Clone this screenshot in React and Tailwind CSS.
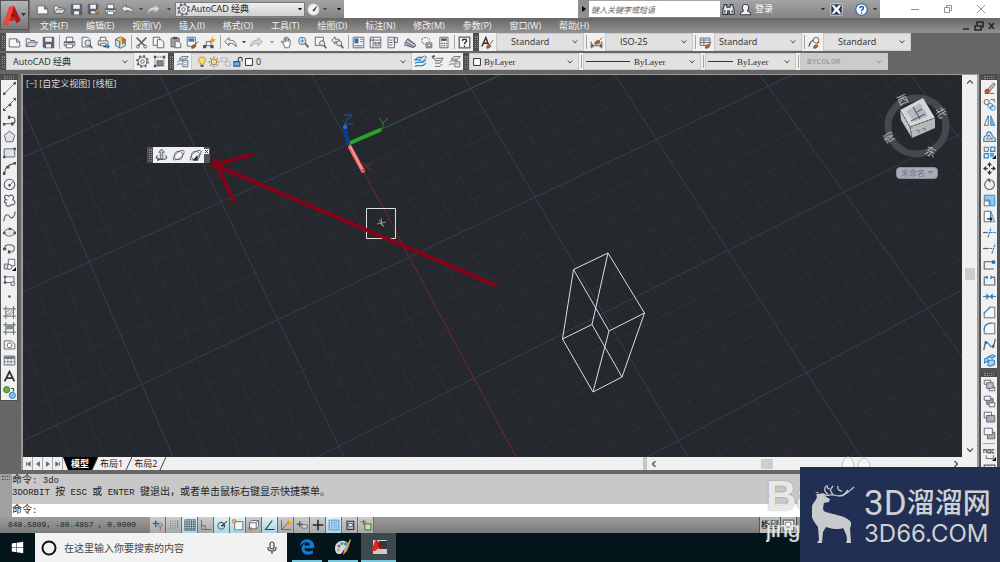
import { useState } from 'react';
import { FaEdgeLegacy, FaWindows } from 'react-icons/fa';

const UI = "font-['Open_Sans','Noto_Sans_CJK_SC',sans-serif]";
const MONO = "font-['Liberation_Mono','Noto_Sans_CJK_SC',monospace]";

const paper = { fill: '#f4f5f7', stroke: '#59606a' };
const blue = { stroke: '#2f86c8' };
const dark = { fill: '#4b525c', stroke: 'none' };

// All toolbar drawings live on a 16x16 grid
const icons = {
  nuevo: <path d="M1.500 3.500h9l4 4v6h-13zM10.500 3.500v4h4" {...paper} />,
  open: <><path d="M1.500 13V3.500h4l1 2h5v2" {...paper} /><path d="M1.500 13l3-5.500h11L12 13z" fill="#cfd5dc" /></>,
  save: <><path d="M1.500 1.500h13v13h-12l-1-1z" fill="#59616d" /><path d="M4 2h8v5H4zM5 10h6v4H5z" fill="#eef0f3" stroke="none" /></>,
  saveAs: <><path d="M1.500 1.500h12v12h-12z" fill="#59616d" /><path d="M4 2h7v5H4zM5 10h5v3H5z" fill="#eef0f3" stroke="none" /><path d="M8 14l6-7 1.500 1.500-6 6z" fill="#f0a040" stroke="#a85f18" strokeWidth=".6" /></>,
  print: <><path d="M4 7V1.500h8V7M1.500 7h13v5h-13z" {...paper} /><path d="M4 10h8v4.500H4z" fill="#fff" /><path d="M2 8h12" strokeWidth="1.600" /></>,
  preview: <><path d="M2.500 1.500h7l3 3v9h-10z" {...paper} /><circle cx="9.500" cy="8.500" r="3.500" fill="#dbe7f0" /><path d="M12 11l3 4" strokeWidth="2" /></>,
  publish: <><path d="M4 6V1.500h7V6M1.500 6h12v5h-12z" {...paper} /><path d="M4 9h7v3H4z" fill="#fff" /><path d="M8 12h5v-2l3 3-3 3v-2H8z" fill="#2469b8" stroke="none" /></>,
  cube3d: <><path d="M8 1l6 3v8l-6 3-6-3V4z" fill="#cfe2ee" /><circle cx="10" cy="6" r="4" fill="#e8c840" stroke="none" /><path d="M10 2a4 4 0 0 1 4 4h-4z" fill="#d8543a" stroke="none" /><path d="M10 10a4 4 0 0 0 4-4h-4z" fill="#4fa85a" stroke="none" /><path d="M2 4l5 3v8" /></>,
  cut: <><path d="M2 2l10 10M14 2L4 12" strokeWidth="1.800" /><circle cx="3.500" cy="13" r="1.800" /><circle cx="12.500" cy="13" r="1.800" /></>,
  copy: <><path d="M1.500 1.500h8v10h-8z" {...paper} /><path d="M6.500 4.500h5l3 3v7h-8z" {...paper} /></>,
  paste: <><path d="M2.500 2.500h10v11h-10z" fill="#a6a396" /><path d="M5 1h5v3H5z" {...dark} /><path d="M7.500 6.500h4l3 3v5h-7z" {...paper} /></>,
  match: <><path d="M1.500 1.500h10v11h-10z" {...paper} /><path d="M3 3h7v4H3z" fill="#3b78b8" stroke="none" /><path d="M15 7l-4 4M7 15c0-3 2-5 4-4s1 4-4 4z" fill="#b96a2c" stroke="#84471a" /></>,
  blockEdit: <><path d="M4 12V7h6v5z" {...paper} /><path d="M0 11h4v4H0zM9 11h4v4H9z" {...dark} /><path d="M13 0l-5 6h3l-1 4 6-6h-4z" fill="#f39a1f" stroke="none" /></>,
  undo: <path d="M1 7l5-5v3c5 0 9 2 9 8-2-3-4-4-9-4v3z" fill="#f1f2f4" />,
  redo: <path d="M15 7l-5-5v3C5 5 1 7 1 13c2-3 4-4 9-4v3z" fill="#d8dadd" stroke="#a2a6ac" />,
  pan: <path d="M4 9L1.500 7.500C1 6 3 6 5 8V3.500c0-1.500 1.500-1.500 1.700 0V2c.2-1.500 1.800-1.500 2 0v1c.3-1.300 1.800-1.300 2 0v2c.3-1 1.800-1 1.800.5V10l-1.500 4.500h-5zM6.700 3v4M8.700 3v4M10.700 4v3" fill="#fff" />,
  zoom: <><circle cx="6.500" cy="6" r="4.500" fill="#e6edf3" /><path d="M10 9l4 5" strokeWidth="2.200" /><path d="M6.500 3v6M4 6h5" {...blue} /></>,
  zoomWin: <><path d="M1.500 1.500h10v10h-10z" {...paper} /><circle cx="10" cy="9" r="3.200" fill="#dbe7f0" /><path d="M12 11l3 4" strokeWidth="2.200" /></>,
  zoomPrev: <><path d="M1 5l4-4v3h5v3H5v3z" {...paper} /><circle cx="10" cy="9" r="3.200" fill="#dbe7f0" /><path d="M12 11l3 4" strokeWidth="2.200" /></>,
  props: <><path d="M1.500 1.500h13v13h-13z" {...paper} /><path d="M3 3h5v6H3z" fill="#2f6db0" stroke="none" /><path d="M10 4h3M10 7h3M3 12h10" /></>,
  dc: <><path d="M1.500 1.500h13v13h-13z" {...paper} /><path d="M5 2v12M1 5h14M7 8h2v2H7zM11 8h2v2h-2zM7 12h6" /></>,
  palette: <><path d="M2.500 1.500h8v13h-8z" {...paper} /><path d="M10 2h4v6h-4zM4 5h4M4 8h4M4 11h4" /></>,
  sheet: <><path d="M2 9l4-6 9 7v3l-3 1z" fill="#c9cfd6" /><path d="M1 11l11 3 3-2M3 7l9 5M5 4l9 6" /></>,
  markup: <><path d="M2.500 3.500c2-3 5-1 6-1s4 0 3 3 1 3-2 4-7 0-7-2z" {...paper} strokeDasharray="2 1" /><path d="M7.500 8.500h7v6h-7z" fill="#fff" /><path d="M9 10h4v3H9z" /></>,
  calc: <><path d="M3.500 1.500h10v13h-10z" {...paper} /><path d="M5 3h7v3H5z" {...dark} /><path d="M5 9h7M5 12h7" strokeDasharray="2 1" strokeWidth="1.500" /></>,
  help: <><path d="M1.500 1.500h13v13h-13z" {...paper} strokeWidth="1.600" /><path d="M5.500 6c0-3 5-3 5 0 0 2-2.500 1.500-2.500 4M8 12v1.500" stroke="#222" strokeWidth="1.600" /></>,
  table: <><path d="M1.500 2.500h13v11h-13z" {...paper} /><path d="M2 3h12v3H2z" fill="#6b7684" stroke="none" /><path d="M2 9.500h12M6 5v8M10 5v8" strokeWidth=".8" /></>,
  textStyle: <><path d="M1 13L6 2l4 11M3 9h5" stroke="#333" strokeWidth="1.800" /><path d="M15 5l-4 5M7 15c0-3 2-5 4-4s1 4-4 4z" fill="#b96a2c" stroke="#84471a" /></>,
  dimStyle: <><path d="M1.500 7v8M14.500 7v8M2 12h12M4 10l-2 2 2 2M12 10l2 2-2 2" strokeWidth="1.300" /><path d="M15 2l-4 4M6 10c0-3 2-5 5-4s1 4-5 4z" fill="#b96a2c" stroke="#84471a" /></>,
  tableStyle: <><path d="M1.500 2.500h12v9h-12zM2 5h11M2 8h11M6 3v8" {...paper} /><path d="M15 7l-3 3M8 15c0-3 2-5 4-4s1 4-4 4z" fill="#b96a2c" stroke="#84471a" /></>,
  leaderStyle: <><path d="M1 13c2-8 4-6 6-9" strokeWidth="1.500" /><circle cx="10" cy="5" r="3.500" fill="#f5f5f5" /><path d="M14 7l-3 3M7 15c0-3 2-5 4-4s1 4-4 4z" fill="#b96a2c" stroke="#84471a" /></>,
  gear: <><circle cx="8" cy="8" r="5.500" fill="#f3f3f3" strokeWidth="1.400" /><circle cx="8" cy="8" r="7" strokeDasharray="2.500 3" strokeWidth="1.800" /><circle cx="8" cy="8" r="2.200" /></>,
  myWork: <><path d="M2.500 2.500h11v11h-11z" strokeDasharray="2 1" /><path d="M5 7h7v6H5z" fill="#7d8794" /><path d="M1 1h3v3H1zM12 1h3v3h-3zM1 12h3v3H1z" {...dark} /></>,
  layers: <><path d="M4 5l3-3h8l-3 3zM2 9l2-2h5M1 13l2-2h4" {...paper} /><path d="M8.500 6.500h6v8h-6z" fill="#fff" /><path d="M10 9h3M10 12h3" {...blue} /></>,
  layersBlue: <><path d="M1 6l4-3h9l-4 3zM1 10l3-1h7l4-3M1 14l3-1h7l4-3" {...blue} strokeWidth="1.500" /><path d="M6 6l7-5 2 2-5 5z" fill="#eef2f5" /></>,
  layersPrev: <><path d="M5 6l2-2h8l-3 3H5zM5 10h6l3-3M5 14h6l3-3" {...paper} /><path d="M5 2H2l2-2M1 2l3 3" strokeWidth="1.500" /></>,
  layersState: <><path d="M4 5l3-3h8l-3 3zM2 9l2-2h8M1 13l2-2h4" {...paper} /><path d="M8.500 8.500h6v6h-6z" fill="#fff" /><path d="M10 11h3" /></>,
  bulb: <><path d="M8 1.500c6 0 5 5.500 2.500 7.500v2h-5V9C3 7 2 1.500 8 1.500z" fill="#fbdc6a" stroke="#b08a2a" /><path d="M6 12h4v2.500H6z" {...dark} /></>,
  sun: <><circle cx="8" cy="8" r="3.700" fill="#fbe27a" stroke="#8b7433" /><path d="M8 1v2M8 13v2M1 8h2M13 8h2M3 3l1.500 1.500M11.500 11.500L13 13M13 3l-1.500 1.500M4.500 11.500L3 13" stroke="#6d6140" strokeWidth="1.400" /></>,
  freeze: <><path d="M1.500 2.500h8v5h-8z" stroke="#a9adb2" /><circle cx="10.500" cy="10.500" r="3.500" stroke="#b3b6ba" strokeWidth="2" strokeDasharray="2 1" /></>,
  lock: <><path d="M2.500 7.500h8v6h-8z" fill="#6ab0e4" stroke="#225c92" strokeWidth="1.400" /><path d="M8.500 7V4c0-3 5-3 5 0v3" stroke="#33475c" strokeWidth="1.500" /></>,
  swatch: <path d="M2.500 2.500h11v11h-11z" fill="#fff" stroke="#333" strokeWidth="1.600" />,
  binoc: <path d="M3 2h3v3h4V2h3l2 7v5H9v-4H7v4H1V9zM3.500 9v3M12.500 9v3" fill="#dfe3e8" stroke="#343a43" strokeWidth="1.400" />,
  user: <path d="M1.500 14.500c0-4 3-3 4-5C3 6 4 1.500 8 1.500S13 6 10.500 9.500c1 2 4 1 4 5z" fill="#f1f2f4" stroke="#3d434c" strokeWidth="1.300" />,
  exchange: <><path d="M1 1h14v14H1z" fill="#26344a" stroke="#dce1e8" /><path d="M3 3h2l3 3.500L11 3h2l-3 5 3 5h-2L8 9.500 5 13H3l3-5z" fill="#fff" stroke="#fff" /></>,
  helpRound: <><circle cx="8" cy="8" r="7" fill="#fff" stroke="#2d5fa4" strokeWidth="1.300" /><path d="M5.800 6.500c0-3 4.600-3 4.600 0C10.400 8 8 8 8 10M8 11.500V13" stroke="#1f4e9c" strokeWidth="1.700" /></>,
  compass: <><circle cx="8" cy="8" r="6.500" fill="#f3f4f5" stroke="#e3e3e3" strokeWidth="1.500" /><path d="M7 9l5-5-3 6z" fill="#444" /></>,

  // draw
  line: <><path d="M2 14L14 2" /><path d="M0 13h3v3H0zM13 0h3v3h-3z" {...dark} /></>,
  xline: <><path d="M1 15L15 1" /><path d="M0 12v4h4zM12 0h4v4zM7 7h3v3H7z" {...dark} /></>,
  pline: <><path d="M2 12h9c5 0 5-8 0-8H7" strokeWidth="1.500" /><path d="M0 11h3v3H0zM6 2h3v4H6zM10 10h3v4h-3z" {...dark} /></>,
  polygon: <path d="M8 1.500l6.500 5-2.500 8H4l-2.500-8z" {...paper} fill="#dfe3e8" />,
  rect: <><path d="M1.500 3.500h13v10h-13z" {...paper} fill="#dfe3e8" /><path d="M0 12h3v3H0zM13 2h3v3h-3z" {...dark} /></>,
  arc: <><path d="M2 14C2 8 6 3 14 2" strokeWidth="1.300" /><path d="M0 12h3v4H0zM4 5h4v3H4zM13 0h3v3h-3z" {...dark} /></>,
  circle: <><circle cx="8" cy="8" r="6.500" fill="#eef0f3" strokeWidth="1.300" /><path d="M8 9l4-4" /><circle cx="8" cy="9" r="1.500" {...dark} /></>,
  cloud: <path d="M4 7C-1 4 4-1 7 3c3-4 8 0 5 4 5 2 2 8-2 6-3 4-8 1-6-2-3 0-3-4 0-4z" {...paper} strokeWidth="1.400" />,
  spline: <path d="M1 14c1-10 5-9 7-6s6 2 7-6" strokeWidth="1.400" />,
  ellipse: <><ellipse cx="8" cy="8" rx="6.500" ry="4.500" fill="#e2e6ea" /><path d="M0 7h3v3H0zM13 7h3v3h-3zM7 2h3v3H7z" {...dark} /></>,
  earc: <><path d="M2 8c0-6 12-6 12 0 0 3-3 5-6 4" fill="#eceff2" strokeWidth="1.300" /><path d="M0 7h4v3H0zM6 10h3v4H6z" {...dark} /></>,
  insert: <><path d="M6.500 1.500h8v8h-8z" {...paper} /><path d="M1.500 7.500h6v6h-6z" fill="#dbe0e6" /><circle cx="8" cy="11" r="3" fill="#eee" /><path d="M11 16h5v-5z" fill="#111" stroke="none" /></>,
  block: <><path d="M2.500 3.500h11v7h-11z" {...paper} /><circle cx="12" cy="12" r="2.500" fill="#d5dae0" /><path d="M1 2h3v3H1zM1 9h3v3H1z" {...dark} /></>,
  point: <circle cx="8" cy="8" r="1.500" {...dark} />,
  hatch: <><path d="M3.500 0v16M13 0v16M0 3.500h16M0 12.500h16" /><path d="M4 8l5-4M4 12l9-8M7 12l6-5" strokeWidth=".8" /></>,
  gradient: <><path d="M3.500 0v16M13 0v16M0 3.500h16M0 12.500h16" /><path d="M4 4h9v5H4z" fill="#7e8f8a" stroke="none" /></>,
  region: <><path d="M1.500 3.500h9l4 4v6h-13z" {...paper} /><circle cx="8" cy="9" r="3" fill="#fff" /></>,
  mtext: <path d="M2 14L8 2l6 12M4.500 10h7" stroke="#333" strokeWidth="2.200" />,
  addSel: <><circle cx="4.500" cy="4.500" r="3.800" fill="#6fae3c" stroke="#3f7420" /><circle cx="11.500" cy="11.500" r="3.800" fill="#7cc0f0" stroke="#2b78b5" /><path d="M10 3h3v4" stroke="#222" /></>,

  // modify
  erase: <><path d="M2 14h12" /><path d="M5 10l8-9 2 2-7 9z" fill="#dcc18b" /><circle cx="5" cy="11.500" r="2.500" fill="#e2562c" stroke="#8f2f12" /></>,
  copyObj: <><circle cx="4.500" cy="5" r="3.200" /><path d="M9 2h5v3" /><circle cx="9" cy="9.500" r="3" {...blue} /><circle cx="12" cy="12" r="3" {...blue} /></>,
  mirror: <><path d="M6.500 2v12h-5z" {...paper} /><path d="M9.500 2v12h5z" fill="#7cbdf0" {...blue} /></>,
  offset: <><path d="M1 14h14v-4c-2-1-3 0-4-4-2-6-7-4-6 1-4 0-4 3-4 7z" {...blue} strokeWidth="1.500" /><path d="M4 11h8c-2-1-3-2-4-5-2 0-1 3-2 3z" /></>,
  array: <><path d="M1.500 1.500h5v5h-5z" /><path d="M9.500 1.500h5v5h-5zM1.500 9.500h5v5h-5zM9.500 9.500h3v3h-3z" {...blue} strokeWidth="1.500" /><path d="M11 16h5v-5z" fill="#111" stroke="none" /></>,
  move: <><path d="M8 2v4M8 10v4M2 8h4M10 8h4" stroke="#333" strokeWidth="1.500" /><path d="M8 0l3 4H5zM8 16l3-4H5zM0 8l4-3v6zM16 8l-4-3v6z" fill="#333" stroke="none" /></>,
  rotate: <><path d="M5 3a6 6 0 1 0 5-.5" strokeWidth="1.400" /><path d="M4 1h5v5z" {...dark} /></>,
  scale: <><path d="M1.500 1.500h13v13h-6v-7h-7z" fill="#8dc7f2" {...blue} /><path d="M1.500 8.500h6v6h-6z" fill="#fff" /></>,
  stretch: <><path d="M1.500 1.500h8v13h-8z" {...paper} /><path d="M9.500 1.500l5 13h-5z" {...blue} /><path d="M5 11h6M9 9l2 2-2 2" stroke="#222" strokeWidth="1.500" /></>,
  trim: <><path d="M0 8h6" strokeWidth="1.500" /><path d="M6 14l4-12M9 8h7" {...blue} strokeDasharray="3 1" strokeWidth="1.500" /></>,
  extend: <><path d="M0 8h7" strokeWidth="1.500" /><path d="M8 8h4M11 14l4-12" {...blue} strokeDasharray="3 1" strokeWidth="1.500" /></>,
  breakPt: <><path d="M1.500 14V4.500H12M1.500 13.500h12" strokeWidth="1.300" /><path d="M11 3h4v4h-4z" fill="#2469b8" stroke="none" /></>,
  breakObj: <><path d="M1.500 4.500v9h13v-9" strokeWidth="1.300" /><path d="M1 4h5M10 4h5M5 2v4M10 2v4" {...blue} strokeWidth="1.800" /></>,
  join: <><path d="M0 8h16" {...blue} strokeWidth="1.500" /><path d="M4 4l4 4-4 4zM12 4L8 8l4 4z" fill="#2f86c8" stroke="none" /></>,
  chamfer: <><path d="M1.500 8v6.500h13v-13H9z" {...paper} /><path d="M1 9l8-8" {...blue} strokeWidth="1.500" /></>,
  fillet: <><path d="M1.500 9c0-5 3-7.500 8-7.500h5v13h-13z" {...paper} /><path d="M1.500 10c0-6 3-8.500 9-8.500" {...blue} strokeWidth="1.500" /></>,
  blend: <><path d="M1 15c1-4 0-7 3-9M15 1c-1 4 0 7-3 9" strokeWidth="1.500" /><path d="M2 4h3v3H2zM11 9h3v3h-3z" {...dark} /><path d="M4 5c4 0 4 8 8 5" {...blue} strokeWidth="1.500" /></>,
  explode: <><path d="M2 6l4-2v5l-4 2zM7 3l5-2 3 2-4 2zM7 8l5-1 2 1v5l-5 2-3-1z" fill="#a8d3f2" {...blue} strokeWidth="1.300" /></>,
  front: <><path d="M1.500 1.500h8v5h-8zM7.500 9.500h7v5h-7z" {...paper} /><path d="M4.500 4.500h8v7h-8z" fill="#b9c0c9" /></>,
  back: <><path d="M4.500 4.500h8v7h-8z" fill="#9aa2ad" /><path d="M1.500 1.500h8v5h-8zM7.500 9.500h7v5h-7z" {...paper} /></>,
  above: <><path d="M1.500 1.500h9v7h-9z" {...paper} /><path d="M4.500 5.500h10v8h-10z" fill="#a6aeb8" /></>,
  under: <><path d="M5.500 6.500h9v8h-9z" fill="#a6aeb8" /><path d="M1.500 1.500h10v8h-10z" {...paper} /></>,
  annot: <><path d="M1 6V2h3v4M6 2h3v4H6zM14 2h-3v4h3" strokeWidth="1.400" /><path d="M4 9v4h9V9" /><path d="M11 16h5v-5z" fill="#111" stroke="none" /></>,

  // status
  infer: <><path d="M1 6h8M5 2v9" strokeWidth="2" /><circle cx="11" cy="8" r="2.500" {...blue} /><path d="M11 15v-5" stroke="#c33" /></>,
  snap: <path d="M3 3h10M3 6h10M3 9h10M3 12h7M13 2v11" strokeDasharray="1 2" strokeWidth="1.500" />,
  gridOn: <path d="M1 1h14v14H1zM4 1v14M7 1v14M10 1v14M13 1v14M1 4h14M1 7h14M1 10h14M1 13h14" />,
  ortho: <path d="M2 1v13h13M2 9h5v5" />,
  polar: <><circle cx="7" cy="9" r="4.500" strokeWidth="1.400" /><path d="M7 9l8-6M7 9h5" stroke="#222" strokeWidth="1.300" /></>,
  osnap: <><path d="M3.500 3.500h11v11h-11z" {...paper} /><path d="M1 1h4v4H1z" fill="#f6c58e" stroke="#c9712a" /></>,
  osnap3d: <><path d="M2 5l3-3h9v8l-3 3H2z" {...paper} /><path d="M2 5h9v8M11 5l3-3" /><circle cx="3" cy="13" r="2" stroke="#d2551e" /></>,
  otrack: <path d="M14 14H2L11 2" stroke="#24424c" strokeWidth="1.500" />,
  ducs: <><path d="M2 1v13h13M2 14L10 6" /><path d="M12 0L8 6h3l-1 4 5-6h-3z" fill="#f39a1f" stroke="none" /></>,
  dyn: <><path d="M1 7h8M5 3v8" strokeWidth="1.800" /><path d="M8 8h7v4H8z" fill="#eee" /></>,
  lwt: <path d="M1 8h14M8 1v14" stroke="#222" strokeWidth="2" />,
  tpy: <><path d="M1.500 1.500h13v13h-13z" fill="#cbe4f7" {...blue} /><path d="M2 5h12M2 8h12M2 11h12M5 2v12M8 2v12M11 2v12" {...blue} strokeDasharray="1 1" /></>,
  qp: <><path d="M4 3h9v11H4z" stroke="#333" strokeWidth="1.500" /><path d="M6 6h5v4H6z" fill="#eee" /></>,
  cycling: <><path d="M1 4h7M5 1v7" strokeWidth="1.500" /><path d="M6.500 6.500h8v8h-8z" fill="#c5dfae" stroke="#4d8a33" strokeWidth="1.500" /></>,
  layout: <><path d="M1.500 1.500h13v13h-13z" fill="#fff" strokeWidth="1.500" /><path d="M4 4h7v6H4z" /></>,

  // orbit
  orbit: <><path d="M4 8C-1 10 2 13 8 13s9-3 4-5" strokeWidth="1.300" /><path d="M8 0L4.500 4h2v8h3V4h2z" {...paper} fill="#c3c9d0" /><path d="M3 10l4 3-4 2z" {...dark} /></>,
  freeOrbit: <><circle cx="8" cy="8" r="5" fill="#f4f5f7" /><path d="M2 14C-1 10 9 0 14 2c4 3-6 13-11 11" strokeWidth="1.200" /></>,
  contOrbit: <><circle cx="8" cy="8" r="5" fill="#f4f5f7" /><path d="M2 14C-1 10 9 0 14 2c4 3-6 13-11 11" strokeWidth="1.200" /><path d="M5 14l5-6 1 6z" fill="#222" /></>,
};

const Icon = ({ name, className = 'size-[13px]' }) => (
  <svg viewBox="0 0 16 16" className={`shrink-0 ${className}`} fill="none" stroke="#59606a" strokeWidth="1.100" aria-hidden="true">
    {icons[name]}
  </svg>
);

const ToolButton = ({ name }) => (
  <button type="button" aria-label={name} className="flex h-full w-[17px] shrink-0 items-center justify-center hover:bg-sky-100">
    <Icon name={name} />
  </button>
);

const Caret = ({ className = 'w-[9px] text-[#444]' }) => (
  <button type="button" aria-label="más" className={`flex h-full shrink-0 items-center justify-center ${className}`}>
    <svg viewBox="0 0 6 4" className="w-1" fill="currentColor"><path d="M0 0h6L3 4z" /></svg>
  </button>
);

const Sep = () => <div className="flex w-1 shrink-0 justify-center py-0.5"><div className="w-px bg-[#a5a5a5]" /></div>;

const Grip = () => (
  <div className="flex w-1.5 shrink-0 items-center justify-center bg-[#4d4d4d]">
    <div className="h-3 w-[3px] border-x border-dotted border-[#8c8c8c]" />
  </div>
);

const Chevron = () => (
  <svg viewBox="0 0 8 5" className="pointer-events-none w-1.5 shrink-0" fill="none" stroke="currentColor" strokeWidth="1.100"><path d="M1 .5l3 3.500 3-3.500" /></svg>
);

const Combo = ({ label, value, className = '', textClass = 'pl-3', children, disabled }) => (
  <div className={`flex shrink-0 items-center border border-[#c9c9c9] pr-[5px] ${disabled ? 'bg-[#cbcbcb] text-[#8b8b8b]' : 'bg-[#e1e1e1] text-[#2b2b2b]'} ${className}`}>
    {children}
    <select aria-label={label} disabled={disabled} className={`h-full min-w-0 flex-1 appearance-none bg-transparent outline-none ${textClass}`}>
      <option>{value}</option>
    </select>
    <Chevron />
  </div>
);

const TopBar = () => (
  <div className="flex h-[18px] bg-white">
    <div className="flex w-[314px] shrink-0 items-center bg-linear-to-b from-[#a4a4a4] to-[#838383] pl-1">
      {['nuevo', 'open', 'save', 'saveAs', 'print', 'undo'].map((n) => <ToolButton key={n} name={n} />)}
      <Caret />
      <ToolButton name="redo" />
      <Caret className="w-[13px] text-[#444]" />
      <div className="flex h-[15px] w-[130px] items-center border border-[#7b7b7b] bg-linear-to-b from-[#efefef] to-[#d0d0d0] pr-0.5 pl-px text-[#222]">
        <Icon name="gear" />
        <select aria-label="工作空间" className="h-full flex-1 appearance-none bg-transparent pl-px outline-none">
          <option>AutoCAD 经典</option>
        </select>
        <svg viewBox="0 0 6 4" className="w-1"><path d="M0 0h6L3 4z" /></svg>
      </div>
      <ToolButton name="compass" />
      <Caret className="w-1.5 text-[#444]" />
      <Caret className="ml-1.5 w-2.5 text-black" />
    </div>
    <div className="flex-1" />
    <div className="flex w-[302px] shrink-0 items-center bg-linear-to-b from-[#a4a4a4] to-[#838383]">
      <button type="button" aria-label="展开" className="flex h-full w-[11px] items-center justify-center bg-[#8f8f8f]">
        <svg viewBox="0 0 4 6" className="h-1.5"><path d="M0 0l4 3-4 3z" /></svg>
      </button>
      <input aria-label="搜索" placeholder="键入关键字或短语" className="h-4 w-[131px] bg-white pl-0.5 text-[8px] italic outline-none placeholder:text-[#666]" />
      <ToolButton name="binoc" />
      <ToolButton name="user" />
      <button type="button" className="flex-1 pl-px text-left text-white">登录</button>
      <Caret className="w-1.5 text-[#333]" />
      <div className="ml-0.5 flex h-full"><ToolButton name="exchange" /></div>
      <div className="ml-2 flex h-full"><ToolButton name="helpRound" /></div>
      <Caret className="w-2.5 text-[#333]" />
    </div>
    <div className="flex w-[120px] shrink-0 items-center justify-end gap-[25px] pr-[15px] text-[#8f8f8f]">
      <button type="button" aria-label="最小化"><svg viewBox="0 0 8 8" className="size-2" stroke="currentColor" fill="none"><path d="M0 4.500h8" /></svg></button>
      <button type="button" aria-label="还原"><svg viewBox="0 0 8 8" className="size-2" stroke="currentColor" fill="none"><path d="M.5 2.500h5v5h-5zM2.500 2V.5h5v5H6" /></svg></button>
      <button type="button" aria-label="关闭"><svg viewBox="0 0 8 8" className="size-2" stroke="currentColor" fill="none"><path d="M0 0l8 8M8 0L0 8" /></svg></button>
    </div>
  </div>
);

const menus = ['文件(F)', '编辑(E)', '视图(V)', '插入(I)', '格式(O)', '工具(T)', '绘图(D)', '标注(N)', '修改(M)', '参数(P)', '窗口(W)', '帮助(H)'];

const Header = () => (
  <header className="flex bg-[#6f6f6f]">
    <button type="button" aria-label="应用程序菜单" className="flex h-[30px] w-[29px] shrink-0 items-center justify-center border border-[#555] bg-linear-to-b from-[#b5b5b5] to-[#777]">
      <svg viewBox="0 0 18 24" className="h-[23px] w-[18px]">
        <path d="M0 22L6 3l5-1 7 15-4 3-2-3-6 1-2 4z" fill="#d3221d" />
        <path d="M6 3l5-1-5 17-2 3H0z" fill="#f0463c" />
        <path d="M8 13l2-5 2 5z" fill="#7a0f0f" />
        <path d="M11 2l7 15-4 3-4-12z" fill="#b01818" />
      </svg>
      <svg viewBox="0 0 6 4" className="w-[5px]" fill="#333"><path d="M0 0h6L3 4z" /></svg>
    </button>
    <div className="min-w-0 flex-1 pl-px">
      <TopBar />
      <div className="flex h-[15px] items-center justify-between bg-linear-to-b from-[#686868] to-[#929292] pr-1 pl-2.5">
        <nav className="flex gap-[18px]">
          {menus.map((m) => <button key={m} type="button" className="whitespace-nowrap text-[#f3f3f3] hover:underline">{m}</button>)}
        </nav>
        <svg viewBox="0 0 34 10" className="h-2.5 w-[34px]" fill="none" stroke="#262626" strokeWidth="1.600"><path d="M1 8h6M13 5h6v4h-6zM15 4V1h6v5h-1M27 2l5 6M32 2l-5 6" /></svg>
      </div>
    </div>
  </header>
);

const standard = [
  ['nuevo', 'open', 'save'],
  ['print', 'preview', 'publish', 'cube3d'],
  ['cut', 'copy', 'paste', 'match', 'blockEdit'],
];

const Toolbars = () => (
  <div className="flex flex-col gap-0.5 bg-[#666] pb-1">
    <div className="flex h-[18px]">
      <Grip />
      <div className="flex shrink-0 items-center bg-[#f0f0f0]">
        {standard.map((group, i) => (
          <div key={i} className="flex h-full">
            {group.map((n) => <ToolButton key={n} name={n} />)}
            <Sep />
          </div>
        ))}
        <ToolButton name="undo" />
        <Caret />
        <ToolButton name="redo" />
        <Caret className="w-[13px] text-[#999]" />
        {['pan', 'zoom', 'zoomWin', 'zoomPrev'].map((n) => <ToolButton key={n} name={n} />)}
        <div className="flex h-full"><Sep /></div>
        {['props', 'dc', 'palette', 'sheet', 'markup', 'calc'].map((n) => <ToolButton key={n} name={n} />)}
        <div className="flex h-full"><Sep /></div>
        <ToolButton name="help" />
      </div>
      <Grip />
      <div className="flex shrink-0 bg-[#f0f0f0]">
        <ToolButton name="textStyle" />
        <Combo label="文字样式" value="Standard" className="w-[88px]" textClass="pl-[14px]" />
        <Sep />
        <ToolButton name="dimStyle" />
        <Combo label="标注样式" value="ISO-25" className="w-[88px]" textClass="pl-[14px]" />
        <Sep />
        <ToolButton name="tableStyle" />
        <Combo label="表格样式" value="Standard" className="w-[88px]" textClass="pl-1" />
        <Sep />
        <ToolButton name="leaderStyle" />
        <Combo label="多重引线样式" value="Standard" className="w-[88px]" textClass="pl-[14px]" />
      </div>
    </div>
    <div className="flex h-[17px]">
      <Grip />
      <div className="flex shrink-0 bg-[#f0f0f0]">
        <Combo label="工作空间" value="AutoCAD 经典" className="w-[128px]" textClass="pl-1.5" />
        <ToolButton name="gear" />
        <ToolButton name="myWork" />
      </div>
      <Grip />
      <div className="flex shrink-0 bg-[#f0f0f0]">
        <ToolButton name="layers" />
        <Combo label="图层" value="0" className="w-[221px] pl-1" textClass="pl-0.5">
          {['bulb', 'sun', 'freeze', 'lock'].map((n) => <Icon key={n} name={n} className="size-3" />)}
          <Icon name="swatch" className="size-2.5" />
        </Combo>
        {['layersBlue', 'layersPrev', 'layersState'].map((n) => <ToolButton key={n} name={n} />)}
      </div>
      <Grip />
      <div className="flex shrink-0 bg-[#f0f0f0] font-['Liberation_Serif',serif] text-black">
        <Combo label="颜色" value="ByLayer" className="w-[110px] pl-0.5" textClass="pl-0.5">
          <Icon name="swatch" className="size-2.5" />
        </Combo>
        <Sep />
        <Combo label="线型" value="ByLayer" className="w-[118px] pl-0.5" textClass="pl-1">
          <div className="h-px w-11 bg-[#333]" />
        </Combo>
        <Sep />
        <Combo label="线宽" value="ByLayer" className="w-[91px] pl-0.5" textClass="pl-1">
          <div className="h-px w-[25px] bg-[#333]" />
        </Combo>
        <Sep />
        <Combo label="打印样式" value="BYCOLOR" disabled className="w-[88px]" textClass="pl-1.5 font-['Liberation_Mono',monospace] text-[8px]" />
      </div>
    </div>
  </div>
);

const SideBar = ({ names }) => (
  <div className="flex w-[18px] shrink-0 flex-col border border-[#505050] bg-[#f0f0f0]">
    <div className="flex h-[5px] items-center justify-center bg-[#4d4d4d]"><div className="h-[3px] w-2.5 border-y border-dotted border-[#8c8c8c]" /></div>
    {names.map((n, i) => n === '-' ? (
      <div key={i} className="mx-0.5 my-0.5 h-px bg-[#a5a5a5]" />
    ) : (
      <button key={n} type="button" aria-label={n} className="flex h-4 shrink-0 items-center justify-center hover:bg-sky-100"><Icon name={n} /></button>
    ))}
  </div>
);

const drawTools = ['line', 'xline', 'pline', 'polygon', 'rect', 'arc', 'circle', 'cloud', 'spline', 'ellipse', 'earc', 'insert', 'block', 'point', 'hatch', 'gradient', 'region', 'table', 'mtext', 'addSel'];
const modifyTools = ['erase', 'copyObj', 'mirror', 'offset', 'array', 'move', 'rotate', 'scale', 'stretch', 'trim', 'extend', 'breakPt', 'breakObj', 'join', 'chamfer', 'fillet', 'blend', 'explode'];
const orderTools = ['front', 'back', 'above', 'under', '-', 'annot', 'layout'];

// [y at left edge, y at right edge] and [x at top, x at bottom] of the major grid lines
const alongY = [[35, -362], [157, -252], [292, -135], [441, -6], [605, 133], [788, 290], [986, 465], [1200, 655]];
const alongX = [[-140, 2], [9, 173], [160, 344], [312, 516], [463, 688], [615, 861], [760, 1034], [910, 1210], [1060, 1400]];

const subdivide = (lines) => lines.slice(1).flatMap(([a, b], i) => {
  const [p, q] = lines[i];
  return [1, 2, 3, 4].map((k) => [p + ((a - p) * k) / 5, q + ((b - q) * k) / 5]);
});

const toPath = (ys, xs) =>
  ys.map(([a, b]) => `M23 ${a}L962 ${b}`).join('') + xs.map(([a, b]) => `M${a} 75L${b} 457`).join('');

const Drawing = () => (
  <svg viewBox="23 75 939 382" preserveAspectRatio="xMidYMid slice" className="absolute inset-0 size-full" fill="none">
    <path d={toPath(subdivide(alongY), subdivide(alongX))} stroke="#2e3238" />
    <path d={toPath(alongY, alongX)} stroke="#393d52" />
    <path d="M349 144L500 75" stroke="#256325" />
    <path d="M349 144L516 457" stroke="#6e2228" />
    <g strokeLinecap="round" strokeWidth="4">
      <path d="M350 143L380 130" stroke="#28a428" />
      <path d="M350 147L363 171" stroke="#ee6a6a" />
      <path d="M345 128L348 143" stroke="#0c3b94" />
    </g>
    <path d="M350 146L362 169" stroke="#ffb0b0" />
    <circle cx="345" cy="127" r="2" fill="#2a70e0" />
    <path d="M344 115h8l-8 9h9" stroke="#2458b8" />
    <path d="M379 118l4 5 5-5M383 123v5" stroke="#2a8a2a" />
    <path d="M362 162l10 9M372 162l-10 9" stroke="#8c2a2a" />
    <g stroke="#dedede">
      <path d="M366.500 208.500h29v30h-29z" />
      <path d="M573.500 269.500L608 253L644.500 313L609 331zM562.500 339L592 324.500L622 377L593 392zM573.500 269.500L562.500 339M608 253L592 324.500M644.500 313L622 377M609 331L593 392" />
    </g>
    <path d="M377 224l9-2" stroke="#7fa05a" />
    <path d="M381 218l1 8" stroke="#6f9fd0" />
    <path d="M379 220l5 7" stroke="#b98a80" />
    <g stroke="#8a0016" strokeWidth="3.600" strokeLinecap="round">
      <path d="M215 165L495 285" />
      <path d="M213 165L251 155M214 160L234 201M212 166h5" />
    </g>
  </svg>
);

const ViewCube = () => (
  <div className="absolute top-4 right-1.5 flex flex-col items-center gap-2">
    <svg viewBox="879 91 78 68" className="h-[68px] w-[78px]" fontFamily="Noto Sans CJK SC" fontSize="11" fill="#b9bbbe">
      <ellipse cx="918" cy="126" rx="29" ry="28" fill="none" stroke="#46494e" strokeWidth="7" />
      <text x="903" y="99" textAnchor="middle" dominantBaseline="central" transform="rotate(-25 903 99)">西</text>
      <text x="943" y="112" textAnchor="middle" dominantBaseline="central" transform="rotate(60 943 112)">北</text>
      <text x="889" y="138" textAnchor="middle" dominantBaseline="central" transform="rotate(-120 889 138)">南</text>
      <text x="932" y="151" textAnchor="middle" dominantBaseline="central" transform="rotate(25 932 151)">东</text>
      <path d="M901 110l23-12 12 20-25 9z" fill="#d5d6d8" />
      <path d="M911 127l25-9v10l-23 10z" fill="#b6b8bb" />
      <path d="M901 110l10 17 2 11-11-18z" fill="#c2c4c7" />
      <path d="M907 111l14-8 8 13-14 6z" fill="#b3bac4" />
      <path d="M914 107l7 12M918 112l5-3M912 121l14-7" fill="none" stroke="#5b626b" strokeWidth="1.200" />
      <path d="M901 110l10 17 25-9M911 127l2 11" fill="none" stroke="#555" strokeDasharray="3 1" />
      <path d="M917 131l3-1v3M923 129l3-1v3" fill="none" stroke="#777" />
    </svg>
    <button type="button" className="flex h-3 w-[42px] items-center justify-between rounded-sm border border-[#8b8f9c] bg-[#a9adba] px-1 text-[8px] text-[#6d7180]">
      未命名<svg viewBox="0 0 6 4" className="w-[5px]" fill="none" stroke="currentColor"><path d="M0 .5h6L3 3.500z" /></svg>
    </button>
  </div>
);

const OrbitBar = () => (
  <div className="absolute top-[72px] left-[124px] flex h-4 items-stretch bg-[#555]">
    <Grip />
    <div className="flex bg-[#f0f0f0]">
      {['orbit', 'freeOrbit', 'contOrbit'].map((n) => <ToolButton key={n} name={n} />)}
    </div>
    <button type="button" aria-label="关闭" className="flex w-1.5 items-start pt-0.5">
      <svg viewBox="0 0 5 5" className="size-[5px] bg-white" stroke="#333"><path d="M1 1l3 3M4 1L1 4" /></svg>
    </button>
  </div>
);

const Arrow = ({ d, className = '' }) => (
  <svg viewBox="0 0 8 8" className={`size-1.5 ${className}`} fill="none" stroke="#444" strokeWidth="1.600"><path d={d} /></svg>
);

const LayoutTabs = ({ tab, onTab }) => (
  <div className="flex h-[13px] shrink-0 bg-[#f0f0f0]">
    <div className="flex text-[#666]">
      {['M2 1v6M7 1L3 4l4 3z', 'M6 1L2 4l4 3z', 'M2 1l4 3-4 3z', 'M6 1v6M1 1l4 3-4 3z'].map((d) => (
        <button key={d} type="button" aria-label="nav" className="flex w-2.5 items-center justify-center border-r border-[#aaa]">
          <svg viewBox="0 0 8 8" className="size-1.5" fill="currentColor" stroke="currentColor"><path d={d} /></svg>
        </button>
      ))}
    </div>
    {['模型', '布局1', '布局2'].map((t) => (
      <button key={t} type="button" onClick={() => onTab(t)} className="flex items-center">
        {t === tab && <svg viewBox="0 0 6 13" className="h-[13px] w-1.5"><path d="M0 0h6v13H5z" /></svg>}
        <span className={`flex h-full items-center px-0.5 ${t === tab ? 'bg-black font-bold text-white' : 'text-[#222]'}`}>{t}</span>
        <svg viewBox="0 0 7 13" className="h-[13px] w-[7px]" stroke="#444" fill={t === tab ? '#000' : 'none'}><path d="M0 0h7L1 13H0" stroke="none" /><path d="M7 0L1 13" /></svg>
      </button>
    ))}
    <div className="flex-1" />
    <div className="flex w-[334px] items-center border-l-4 border-[#c5c5c5] pl-1">
      <Arrow d="M6 0L2 4l4 4" />
      <div className="mx-1 flex h-full flex-1 items-center"><div className="ml-[100px] h-2.5 w-3 bg-[#cdcdcd]" /></div>
      <Arrow d="M2 0l4 4-4 4" className="mr-[18px]" />
    </div>
  </div>
);

const Workspace = () => {
  const [tab, setTab] = useState('模型');

  return (
    <main className="flex min-h-[340px] flex-1 basis-0 overflow-hidden bg-[#666]">
      <div className="mr-[3px] shrink-0"><SideBar names={drawTools} /></div>
      <div className="flex min-w-0 flex-1 flex-col border-2 border-t border-b-0 border-[#9b9b9b]">
        <div className="flex min-h-0 flex-1">
          <div className="relative flex-1 overflow-hidden bg-[#25282d]">
            <Drawing />
            <div className="absolute top-[3px] left-[3px] text-[#d9d9d9]">[−] [自定义视图] [线框]</div>
            <OrbitBar />
            <ViewCube />
          </div>
          <div className="flex w-[15px] shrink-0 flex-col items-center justify-between bg-[#f0f0f0] py-1">
            <Arrow d="M0 6l4-4 4 4" />
            <div className="mt-4 h-3 w-2.5 bg-[#cdcdcd]" />
            <Arrow d="M0 2l4 4 4-4" />
          </div>
        </div>
        <LayoutTabs tab={tab} onTab={setTab} />
      </div>
      <div className="flex w-[21px] shrink-0 flex-col gap-0.5 bg-[#555] pl-px">
        <SideBar names={modifyTools} />
        <SideBar names={orderTools} />
      </div>
    </main>
  );
};

const CommandLine = () => (
  <section className={`flex border-t-4 border-[#666] bg-[#a0a0a0] text-[9px] text-[#222] ${MONO}`}>
    <div className="flex w-3 shrink-0 justify-center pt-0.5"><div className="h-1 w-2 border-y border-dotted border-[#555]" /></div>
    <div className="flex-1">
      <div className="h-[30px] bg-[#c8c8c8] pt-px leading-[11px]">
        <p><span className="text-[10px]">命令</span>: 3do</p>
        <p className="whitespace-nowrap">
          3DORBIT <span className="text-[10px]">按</span> ESC <span className="text-[10px]">或</span> ENTER <span className="text-[10px]">键退出，或者单击鼠标右键显示快捷菜单。</span>
        </p>
      </div>
      <label className="flex h-[13px] items-center bg-white">
        <span><span className="text-[10px]">命令</span>:</span>
        <input className="ml-1 h-full flex-1 outline-none" />
      </label>
    </div>
  </section>
);

const statusTools = ['infer', 'snap', 'gridOn', 'ortho', 'polar', 'osnap', 'osnap3d', 'otrack', 'ducs', 'dyn', 'lwt', 'tpy', 'qp', 'cycling'];

const StatusBar = () => {
  const [on, setOn] = useState(['gridOn', 'polar', 'osnap', 'otrack', 'tpy']);
  const toggle = (n) => setOn(on.includes(n) ? on.filter((x) => x !== n) : [...on, n]);

  return (
    <div className="flex h-4 items-stretch bg-linear-to-b from-[#9c9c9c] to-[#7b7b7b]">
      <div className={`flex w-[150px] items-center gap-1 pl-2 text-[8px] text-[#1d1d1d] ${MONO}`}>
        <span>848.5809,</span><span>-80.4857</span><span>, 0.0000</span>
      </div>
      {statusTools.map((n) => (
        <button key={n} type="button" aria-label={n} onClick={() => toggle(n)}
          className={`flex w-4 items-center justify-center border-r border-[#6e6e6e] ${on.includes(n) ? 'bg-linear-to-b from-[#e0f3f6] to-[#a9d6df]' : 'bg-linear-to-b from-[#cdcdcd] to-[#a8a8a8]'}`}>
          <Icon name={n} className="size-3" />
        </button>
      ))}
      <div className="flex-1" />
      <div className="flex w-[241px]">
        <button type="button" className="w-[22px] border-x border-[#555] bg-[#bdbdbd] text-black">模型</button>
        <button type="button" aria-label="布局" className="flex w-4 items-center justify-center border-r border-[#555] bg-[#bdbdbd]"><Icon name="layout" /></button>
      </div>
    </div>
  );
};

const TaskBar = () => (
  <footer className="flex h-[29px] bg-[#04151b]">
    <button type="button" aria-label="开始" className="flex w-[35px] items-center justify-center text-white"><FaWindows className="size-[13px]" /></button>
    <label className="flex w-[252px] items-center bg-[#f2f2f2] px-1.5">
      <svg viewBox="0 0 16 16" className="size-4" fill="none" stroke="#111" strokeWidth="2"><circle cx="8" cy="8" r="6.500" /></svg>
      <input aria-label="搜索" placeholder="在这里输入你要搜索的内容" className="min-w-0 flex-1 bg-transparent pl-[7px] text-[10px] outline-none placeholder:text-[#444]" />
      <svg viewBox="0 0 10 14" className="mr-1 h-3.5 w-2.5" fill="none" stroke="#444" strokeWidth="1.200"><rect x="3" y="1" width="4" height="7" rx="2" /><path d="M1 6v1c0 4 8 4 8 0V6M5 10v3" /></svg>
    </label>
    <div className="flex gap-1.5 pl-[5px]">
      <button type="button" aria-label="Edge" className="flex w-[30px] items-center justify-center border-b-2 border-[#76c7e0] text-[#0f7bd8]"><FaEdgeLegacy className="size-4" /></button>
      <button type="button" aria-label="Paint" className="flex w-[30px] items-center justify-center border-b-2 border-[#76c7e0]">
        <svg viewBox="0 0 18 18" className="size-[18px]">
          <path d="M1 10c0-5 5-8 9-7 5 1 6 6 3 8-2 1-3 0-4 2s-1 3-4 3-4-3-4-6z" fill="#c4dff0" />
          <circle cx="5" cy="8" r="1.500" fill="#d8402c" /><circle cx="8" cy="5.500" r="1.500" fill="#4aa447" /><circle cx="11.500" cy="6" r="1.500" fill="#3c79c8" /><circle cx="4.500" cy="12" r="1.500" fill="#e6a92e" />
          <path d="M16 1l-6 11-1 5 4-4 4-11z" fill="#d99a55" />
        </svg>
      </button>
    </div>
    <button type="button" aria-label="AutoCAD" className="ml-[3px] flex w-[35px] items-center justify-center border-b-2 border-[#76c7e0] bg-[#3d494d]">
      <svg viewBox="0 0 18 16" className="h-4 w-[18px]">
        <path d="M3 1h14v14H3z" fill="#c9cccf" /><path d="M9 2h8v8H9z" fill="#3a3a3a" /><path d="M1 12L6 0l7 10-4-1-4 3z" fill="#e0261f" /><path d="M6 0l7 10-4-1z" fill="#9b1212" />
      </svg>
    </button>
  </footer>
);

const DeerLogo = () => (
  <svg viewBox="812 485 46 60" className="h-[60px] w-[46px] shrink-0" fill="#c9cacb">
    <path d="M815 492l4 2 4-1c2 3 4 5 7 6l-1 3-5 1c-1 5-2 8 2 9 8 3 18 3 24 9 2 2 1 5 0 7l1 15h-5l1-3c0-5-2-8-4-12-4 2-12 1-17-1l-3 5-1 11h-5l2-3-1-13c-4-5-8-11-7-18 1-6 5-8 6-12-1-2-1-3 2-5z" />
    <path d="M823 494c4 3 6 0 11 1 9 3 12-1 20-8M828 494c-4-2-4-5-2-8M833 494c-3-2-3-5 0-8M838 496c5 0 7-2 10-6M830 489c-2 0-3-2-3-4M842 491c-3 0-5-2-4-5" fill="none" stroke="#c9cacb" strokeWidth="1.300" />
  </svg>
);

const Watermarks = () => (
  <div className="pointer-events-none absolute right-0 bottom-0">
    <div className="absolute right-[200px] bottom-5 flex w-[34px] flex-col overflow-hidden font-['Liberation_Sans',sans-serif] whitespace-nowrap text-white/80 [text-shadow:0_0_2px_#8a8a8a]">
      <span className="text-[42px] leading-[44px] font-bold">Ba</span>
      <span className="text-[22px] leading-6">jing</span>
    </div>
    <svg viewBox="0 0 32 14" className="absolute right-32 bottom-[93px] h-3.5 w-8" fill="#f5f5f5" stroke="#c4c4c4"><ellipse cx="8" cy="11" rx="6" ry="9" /><ellipse cx="24" cy="12" rx="6" ry="9" /></svg>
    <div className="relative flex h-[95px] w-[200px] items-center bg-[#212f54] pl-3 text-[#cfd0d2]">
      <DeerLogo />
      <div className="pl-1.5 whitespace-nowrap">
        <div className="flex h-[38px] items-center font-['Roboto','Noto_Sans_CJK_SC',sans-serif]">
          <span className="text-[35px]">3D</span>
          <span className="text-[28px] font-medium">溜溜网</span>
        </div>
        <div className="font-['Inter',sans-serif] text-[24px] leading-[22px]">3D66.COM</div>
      </div>
    </div>
  </div>
);

export default function App() {
  return (
    <div className={`relative flex min-h-screen flex-col overflow-hidden bg-[#666] text-[9px] leading-3 ${UI}`}>
      <Header />
      <Toolbars />
      <Workspace />
      <CommandLine />
      <StatusBar />
      <TaskBar />
      <Watermarks />
    </div>
  );
}
